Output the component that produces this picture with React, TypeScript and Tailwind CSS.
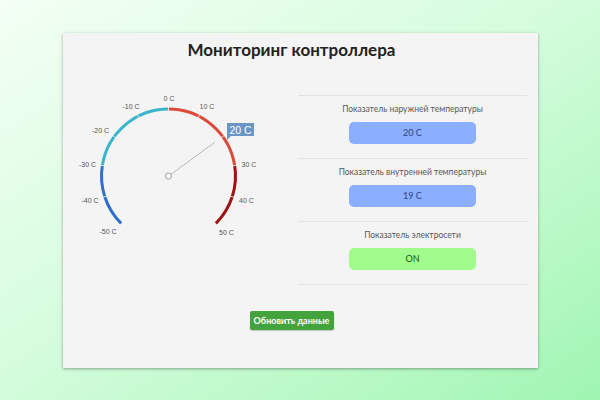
const CX = 105.5;
const CY = 86;
const R = 67;

// value in °C -> angle in degrees from 12 o'clock, clockwise
const toAngle = (v: number) => -135 + (v + 50) * 2.7;

const pt = (v: number, r: number) => {
  const a = (toAngle(v) * Math.PI) / 180;
  return [CX + r * Math.sin(a), CY - r * Math.cos(a)];
};

const arc = (from: number, to: number) => {
  const [x1, y1] = pt(from, R);
  const [x2, y2] = pt(to, R);
  return `M ${x1} ${y1} A ${R} ${R} 0 0 1 ${x2} ${y2}`;
};

const bands = [
  { from: -50, to: -30, color: '#2e6fc9' },
  { from: -30, to: 0, color: '#39b6cb' },
  { from: 0, to: 30, color: '#dc4a3a' },
  { from: 30, to: 50, color: '#9c1414' },
];

// label centres, page offset (63, 90) already removed
const labels = [
  { text: '-50 C', x: 45, y: 141 },
  { text: '-40 C', x: 27, y: 110 },
  { text: '-30 C', x: 24.5, y: 74 },
  { text: '-20 C', x: 37.5, y: 40.5 },
  { text: '-10 C', x: 68, y: 16 },
  { text: '0 C', x: 106, y: 8.5 },
  { text: '10 C', x: 144, y: 16 },
  { text: '30 C', x: 186, y: 74 },
  { text: '40 C', x: 183.5, y: 110 },
  { text: '50 C', x: 163.5, y: 142 },
];

function Gauge({ value }: { value: number }) {
  const [nx, ny] = pt(value, 57);
  const [sx, sy] = pt(value, 3);
  const ticks = [-40, -30, -20, -10, 0, 10, 20, 30, 40];
  return (
    <svg width="220" height="160" viewBox="0 0 220 160">
      {bands.map((b) => (
        <path key={b.from} d={arc(b.from, b.to)} fill="none" stroke={b.color} strokeWidth="3" />
      ))}
      {ticks.map((t) => {
        const [x1, y1] = pt(t, R - 2.5);
        const [x2, y2] = pt(t, R + 2.5);
        return <line key={t} x1={x1} y1={y1} x2={x2} y2={y2} stroke="#f4f4f4" strokeWidth="0.8" />;
      })}
      {labels.map((l) => (
        <text
          key={l.text}
          x={l.x}
          y={l.y}
          textAnchor="middle"
          dominantBaseline="central"
          fontSize="7"
          fill="#555"
          fontFamily="'Liberation Sans', Arial, sans-serif"
        >
          {l.text}
        </text>
      ))}
      <line x1={sx} y1={sy} x2={nx} y2={ny} stroke="#b9b9b9" strokeWidth="1" />
      <circle cx={CX} cy={CY} r="3" fill="#fff" stroke="#9a9a9a" strokeWidth="1" />
      {/* current value flag */}
      <path d="M 164 45 L 164 50 L 168 46 Z" fill="#6a95c5" />
      <rect x="164" y="33" width="27" height="13" fill="#6a95c5" />
      <text
        x="177.5"
        y="39.8"
        textAnchor="middle"
        dominantBaseline="central"
        fontSize="10.5"
        fill="#fff"
        fontFamily="'Liberation Sans', Arial, sans-serif"
      >
        {value} C
      </text>
    </svg>
  );
}

interface StatRowProps {
  label: string;
  value: string;
  tone: 'blue' | 'green';
}

function StatRow({ label, value, tone }: StatRowProps) {
  const pill =
    tone === 'blue' ? 'bg-[#8caeff] text-[#2e3f86]' : 'bg-[#a2fc8c] text-[#24502a]';
  return (
    <div className="flex flex-col items-center border-b border-[#e3e3e3] pt-[8px] pb-[14px]">
      <div className="text-[8.5px] leading-[11px] text-[#5a5a5a]">{label}</div>
      <div
        className={`mt-[7px] flex h-[22px] w-[127px] items-center justify-center rounded-[5px] text-[9px] ${pill}`}
      >
        {value}
      </div>
    </div>
  );
}

export default function App() {
  return (
    <div
      className="h-[400px] w-[600px] bg-linear-to-br from-[#f4fff5] via-[#d2fcdb] to-[#9ff5b2] pl-[63px] pt-[33px]"
      style={{ fontFamily: "Lato, 'Open Sans', sans-serif" }}
    >
      <div className="flex h-[335px] w-[475px] flex-col bg-[#f4f4f4] shadow-[0_1px_3px_rgba(0,0,0,0.35)]">
        <h1 className="pr-[18px] pt-[5px] text-center text-[17px] font-bold leading-[24px] text-[#222]">
          Мониторинг контроллера
        </h1>

        <div className="mt-[28px] flex">
          <div className="w-[235px]">
            <Gauge value={20} />
          </div>
          <div className="w-[229px] pt-[5px]">
            <div className="border-t border-[#e3e3e3]">
              <StatRow label="Показатель наружней температуры" value="20 C" tone="blue" />
              <StatRow label="Показатель внутренней температуры" value="19 C" tone="blue" />
              <StatRow label="Показатель электросети" value="ON" tone="green" />
            </div>
          </div>
        </div>

        <div className="mt-[26px] flex justify-center pr-[18px]">
          <button className="h-[19px] w-[84px] rounded-[2px] bg-[#44a33c] text-[9px] font-bold text-white shadow-[0_1px_1px_rgba(0,0,0,0.2)]">
            Обновить данные
          </button>
        </div>
      </div>
    </div>
  );
}
